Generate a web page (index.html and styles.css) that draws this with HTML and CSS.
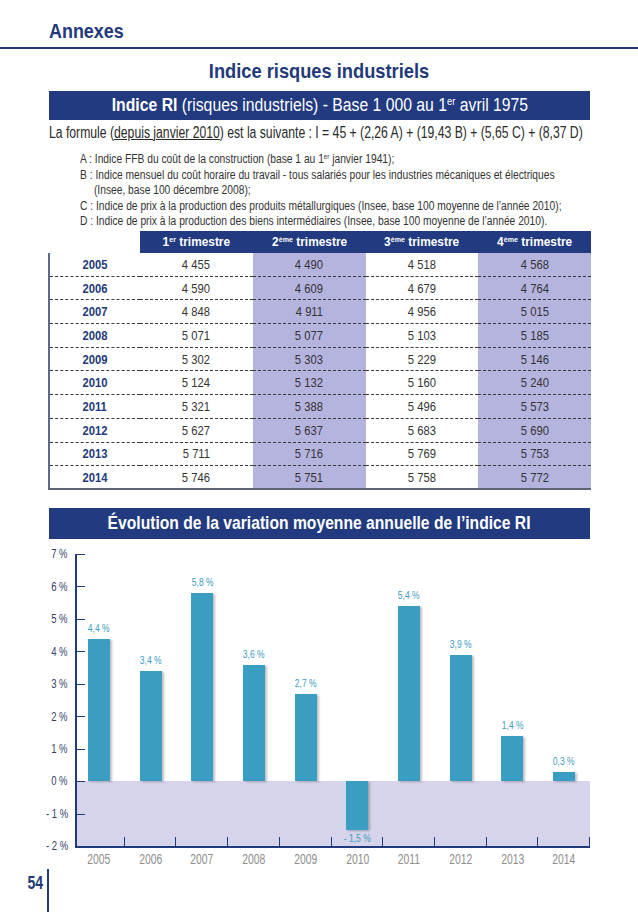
FILE: index.html
```html
<!DOCTYPE html>
<html lang="fr">
<head>
<meta charset="utf-8">
<title>Annexes - Indice risques industriels</title>
<link rel="stylesheet" href="styles.css">
</head>
<body>
<header class="top">
  <div class="section-label">Annexes</div>
</header>
<h1 class="page-title">Indice risques industriels</h1>
<main class="content">
  <div class="band"><span class="band-text"><b>Indice RI</b> (risques industriels) - Base 1 000 au 1<sup>er</sup> avril 1975</span></div>
  <p class="formula">La formule (<u>depuis janvier 2010</u>) est la suivante : I = 45 + (2,26 A) + (19,43 B) + (5,65 C) + (8,37 D)</p>
  <ul class="defs">
    <li>A : Indice FFB du coût de la construction (base 1 au 1<sup>er</sup> janvier 1941);</li>
    <li>B : Indice mensuel du coût horaire du travail - tous salariés pour les industries mécaniques et électriques</li>
    <li class="indent">(Insee, base 100 décembre 2008);</li>
    <li>C : Indice de prix à la production des produits métallurgiques (Insee, base 100 moyenne de l’année 2010);</li>
    <li>D : Indice de prix à la production des biens intermédiaires (Insee, base 100 moyenne de l’année 2010).</li>
  </ul>
  <table class="ri">
    <thead>
      <tr><th class="blank"></th><th><span class="sq">1<sup>er</sup> trimestre</span></th><th><span class="sq">2<sup>ème</sup> trimestre</span></th><th><span class="sq">3<sup>ème</sup> trimestre</span></th><th><span class="sq">4<sup>ème</sup> trimestre</span></th></tr>
    </thead>
    <tbody>
      <tr><td class="yr"><span class="sq">2005</span></td><td><span class="sq">4 455</span></td><td class="sh"><span class="sq">4 490</span></td><td><span class="sq">4 518</span></td><td class="sh"><span class="sq">4 568</span></td></tr>
      <tr><td class="yr"><span class="sq">2006</span></td><td><span class="sq">4 590</span></td><td class="sh"><span class="sq">4 609</span></td><td><span class="sq">4 679</span></td><td class="sh"><span class="sq">4 764</span></td></tr>
      <tr><td class="yr"><span class="sq">2007</span></td><td><span class="sq">4 848</span></td><td class="sh"><span class="sq">4 911</span></td><td><span class="sq">4 956</span></td><td class="sh"><span class="sq">5 015</span></td></tr>
      <tr><td class="yr"><span class="sq">2008</span></td><td><span class="sq">5 071</span></td><td class="sh"><span class="sq">5 077</span></td><td><span class="sq">5 103</span></td><td class="sh"><span class="sq">5 185</span></td></tr>
      <tr><td class="yr"><span class="sq">2009</span></td><td><span class="sq">5 302</span></td><td class="sh"><span class="sq">5 303</span></td><td><span class="sq">5 229</span></td><td class="sh"><span class="sq">5 146</span></td></tr>
      <tr><td class="yr"><span class="sq">2010</span></td><td><span class="sq">5 124</span></td><td class="sh"><span class="sq">5 132</span></td><td><span class="sq">5 160</span></td><td class="sh"><span class="sq">5 240</span></td></tr>
      <tr><td class="yr"><span class="sq">2011</span></td><td><span class="sq">5 321</span></td><td class="sh"><span class="sq">5 388</span></td><td><span class="sq">5 496</span></td><td class="sh"><span class="sq">5 573</span></td></tr>
      <tr><td class="yr"><span class="sq">2012</span></td><td><span class="sq">5 627</span></td><td class="sh"><span class="sq">5 637</span></td><td><span class="sq">5 683</span></td><td class="sh"><span class="sq">5 690</span></td></tr>
      <tr><td class="yr"><span class="sq">2013</span></td><td><span class="sq">5 711</span></td><td class="sh"><span class="sq">5 716</span></td><td><span class="sq">5 769</span></td><td class="sh"><span class="sq">5 753</span></td></tr>
      <tr><td class="yr"><span class="sq">2014</span></td><td><span class="sq">5 746</span></td><td class="sh"><span class="sq">5 751</span></td><td><span class="sq">5 758</span></td><td class="sh"><span class="sq">5 772</span></td></tr>
    </tbody>
  </table>
  <div class="band band-chart"><span class="band-text">Évolution de la variation moyenne annuelle de l’indice RI</span></div>
  <div class="chart">
    <div class="yaxis">
      <span>7 %</span><span>6 %</span><span>5 %</span><span>4 %</span><span>3 %</span><span>2 %</span><span>1 %</span><span>0 %</span><span>- 1 %</span><span>- 2 %</span>
    </div>
    <div class="plot">
      <div class="col"><div class="pos"><span class="val">4,4 %</span><div class="bar" style="height:142.7px"></div></div><div class="neg"></div></div>
      <div class="col"><div class="pos"><span class="val">3,4 %</span><div class="bar" style="height:110.3px"></div></div><div class="neg"></div></div>
      <div class="col"><div class="pos"><span class="val">5,8 %</span><div class="bar" style="height:188.1px"></div></div><div class="neg"></div></div>
      <div class="col"><div class="pos"><span class="val">3,6 %</span><div class="bar" style="height:116.7px"></div></div><div class="neg"></div></div>
      <div class="col"><div class="pos"><span class="val">2,7 %</span><div class="bar" style="height:87.6px"></div></div><div class="neg"></div></div>
      <div class="col"><div class="pos"></div><div class="neg"><div class="bar" style="height:48.6px"></div><span class="val">- 1,5 %</span></div></div>
      <div class="col"><div class="pos"><span class="val">5,4 %</span><div class="bar" style="height:175.1px"></div></div><div class="neg"></div></div>
      <div class="col"><div class="pos"><span class="val">3,9 %</span><div class="bar" style="height:126.5px"></div></div><div class="neg"></div></div>
      <div class="col"><div class="pos"><span class="val">1,4 %</span><div class="bar" style="height:45.4px"></div></div><div class="neg"></div></div>
      <div class="col"><div class="pos"><span class="val">0,3 %</span><div class="bar" style="height:9.7px"></div></div><div class="neg"></div></div>
    </div>
  </div>
  <div class="xaxis">
    <span>2005</span><span>2006</span><span>2007</span><span>2008</span><span>2009</span><span>2010</span><span>2011</span><span>2012</span><span>2013</span><span>2014</span>
  </div>
</main>
<footer class="foot">
  <span class="num">54</span><span class="vline"></span>
</footer>
</body>
</html>
```

FILE: styles.css
```css
* { box-sizing: border-box; margin: 0; padding: 0; }

body {
  width: 638px;
  height: 912px;
  overflow: hidden;
  background: #fff;
  font-family: "Liberation Sans", Arial, sans-serif;
  color: #2a2a2a;
}

sup { font-size: 0.6em; vertical-align: 0.55em; line-height: 0; }

/* condensed look: horizontal squeeze of the text runs */
.sq { display: inline-block; white-space: nowrap; }

.top {
  height: 49px;
  padding: 20px 0 0 49px;
  border-bottom: 2px solid #22397a;
}

.section-label {
  font-size: 19.5px;
  line-height: 22px;
  font-weight: bold;
  color: #22397a;
  transform: scaleX(0.92);
  transform-origin: left center;
}

.page-title {
  margin-top: 10px;
  height: 32px;
  text-align: center;
  font-size: 21px;
  line-height: 24px;
  font-weight: bold;
  color: #22397a;
  transform: scaleX(0.87);
}

.content {
  margin-left: 49px;
  width: 541px;
}

.band {
  height: 29px;
  background: #213a80;
  color: #fff;
  display: flex;
  align-items: center;
  justify-content: center;
  font-size: 18px;
  white-space: nowrap;
}

.band-text { transform: scaleX(0.875); }

.formula {
  margin-top: 4px;
  font-size: 16px;
  line-height: 18px;
  white-space: nowrap;
  transform: scaleX(0.762);
  transform-origin: left center;
}

.defs {
  list-style: none;
  margin: 10px 0 0 31px;
  font-size: 12.5px;
  line-height: 15.5px;
  color: #333;
  white-space: nowrap;
  transform: scaleX(0.82);
  transform-origin: left center;
}

.defs .indent { padding-left: 17px; }

.ri {
  margin-top: 1px;
  margin-left: -1px;
  width: 542px;
  border-collapse: collapse;
  table-layout: fixed;
  font-size: 13.5px;
}

.ri th {
  height: 22px;
  background: #213a80;
  color: #fff;
  font-weight: bold;
  font-size: 13.5px;
  width: 112.75px;
}

.ri th .sq { transform: scaleX(0.88); }

.ri th.blank { background: #fff; width: 91px; }

.ri td {
  height: 23.7px;
  text-align: center;
  border-bottom: 1px dashed #3a3a3a;
  color: #333;
}

.ri td .sq { transform: scaleX(0.83); }

.ri tbody tr:last-child td { border-bottom: 2px solid #5c6478; }

.ri td.yr {
  border-left: 2px solid #5c6a8c;
  font-weight: bold;
  color: #22397a;
}

.ri td.sh { background: #b4b4de; }

.band-chart {
  margin-top: 18px;
  height: 31px;
  font-weight: bold;
}

.band-chart .band-text { transform: scaleX(0.87); }

.chart {
  display: flex;
  margin-top: 15px;
}

.yaxis {
  width: 26px;
  height: 308px;
  margin: -8px 0;
  padding-right: 7px;
  display: flex;
  flex-direction: column;
  justify-content: space-between;
  align-items: flex-end;
  font-size: 12.5px;
  line-height: 16px;
  color: #33406a;
  white-space: nowrap;
}

.yaxis span { transform: scaleX(0.76); transform-origin: right center; }

.plot {
  width: 515px;
  height: 294px;
  border-left: 2px solid #22397a;
  border-bottom: 2px solid #22397a;
  display: flex;
  background:
    repeating-linear-gradient(to bottom, #22397a 0, #22397a 1px, transparent 1px, transparent 32.44px) left top / 8px 100% no-repeat,
    linear-gradient(#d5d4ea, #d5d4ea) left bottom / 100% 65px no-repeat;
}

.col {
  flex: 1;
  display: flex;
  flex-direction: column;
  position: relative;
}

.col:first-child { margin-left: -4px; }

.col::after {
  content: "";
  position: absolute;
  right: 0;
  bottom: 0;
  width: 1px;
  height: 9px;
  background: #22397a;
}

.pos {
  height: 227px;
  flex-shrink: 0;
  display: flex;
  flex-direction: column;
  justify-content: flex-end;
  align-items: center;
}

.neg {
  flex: 1;
  display: flex;
  flex-direction: column;
  align-items: center;
}

.bar {
  width: 22px;
  background: #3a9dc1;
  box-shadow: 2px 1px 2px rgba(0, 0, 0, 0.25);
}

.val {
  font-size: 11.5px;
  line-height: 13px;
  color: #3b9bc0;
  margin: 2px 0 4px;
  white-space: nowrap;
  transform: scaleX(0.74);
}

.neg .val { margin: 2px 0 0; }

.xaxis {
  margin-left: 24px;
  width: 517px;
  display: flex;
  padding-top: 3px;
  font-size: 14px;
  line-height: 16px;
  color: #8e8e8e;
}

.xaxis span { flex: 1; text-align: center; transform: scaleX(0.74); }

.foot {
  margin-top: 2px;
  display: flex;
  align-items: flex-start;
  padding-left: 22px;
}

.num {
  font-size: 19px;
  font-weight: bold;
  color: #22397a;
  line-height: 20px;
  padding-top: 4px;
  width: 21px;
  transform: scaleX(0.74);
  transform-origin: right center;
}

.vline {
  width: 2px;
  height: 50px;
  margin-left: 4px;
  background: #22397a;
}
```
